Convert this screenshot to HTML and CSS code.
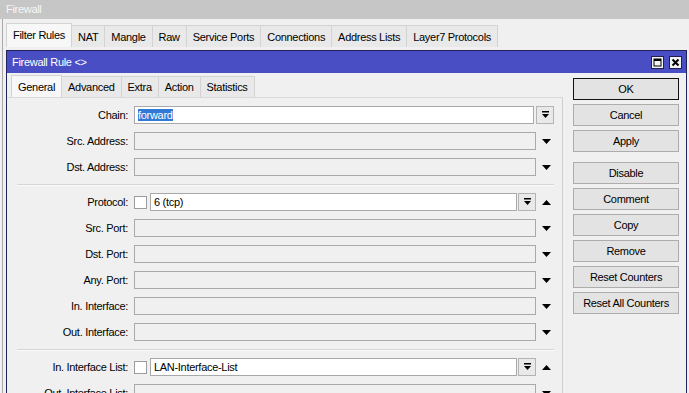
FILE: index.html
```html
<!DOCTYPE html>
<html lang="en">
<head>
    <meta charset="UTF-8">
    <meta name="viewport" content="width=device-width, initial-scale=1.0">
    <title>Firewall Rule</title>
    <link rel="stylesheet" href="styles.css">
</head>
<body>
    <div class="winbar">Firewall</div>
    <div class="workspace">
        <div class="tabs outer">
            <div class="tab active">Filter Rules</div>
            <div class="tab">NAT</div>
            <div class="tab">Mangle</div>
            <div class="tab">Raw</div>
            <div class="tab">Service Ports</div>
            <div class="tab">Connections</div>
            <div class="tab">Address Lists</div>
            <div class="tab">Layer7 Protocols</div>
        </div>

        <div class="dialog">
            <div class="dlg-title">
                <span>Firewall Rule &lt;&gt;</span>
                <div class="dlg-ctrls">
                    <div class="ctrl">
                        <svg width="11" height="11" viewBox="0 0 11 11"><rect x="2" y="2" width="7" height="7" fill="none" stroke="#000" stroke-width="1"/><rect x="2" y="2" width="7" height="2" fill="#000"/></svg>
                    </div>
                    <div class="ctrl">
                        <svg width="11" height="11" viewBox="0 0 11 11"><path d="M2.5 2.5 L8.5 8.5 M8.5 2.5 L2.5 8.5" stroke="#000" stroke-width="2"/></svg>
                    </div>
                </div>
            </div>

            <div class="dlg-main">
                <div class="dlg-left">
                    <div class="tabs inner">
                        <div class="tab active">General</div>
                        <div class="tab">Advanced</div>
                        <div class="tab">Extra</div>
                        <div class="tab">Action</div>
                        <div class="tab">Statistics</div>
                    </div>

                    <div class="panel">
                        <div class="row">
                            <label>Chain:</label>
                            <div class="field white"><span class="selected">forward</span></div>
                            <div class="ddbtn"><svg width="7" height="8" viewBox="0 0 7 8"><rect x="0" y="0" width="7" height="1.5" fill="#000"/><polygon points="0,3 7,3 3.5,7" fill="#000"/></svg></div>
                            <div class="pad"></div>
                        </div>
                        <div class="row">
                            <label>Src. Address:</label>
                            <div class="field"></div>
                            <div class="arrow"><svg width="9" height="5" viewBox="0 0 9 5"><polygon points="0,0 9,0 4.5,5" fill="#000"/></svg></div>
                        </div>
                        <div class="row">
                            <label>Dst. Address:</label>
                            <div class="field"></div>
                            <div class="arrow"><svg width="9" height="5" viewBox="0 0 9 5"><polygon points="0,0 9,0 4.5,5" fill="#000"/></svg></div>
                        </div>

                        <div class="sep"></div>

                        <div class="row">
                            <label>Protocol:</label>
                            <div class="check"></div>
                            <div class="field white">6 (tcp)</div>
                            <div class="ddbtn small"><svg width="7" height="8" viewBox="0 0 7 8"><rect x="0" y="0" width="7" height="1.5" fill="#000"/><polygon points="0,3 7,3 3.5,7" fill="#000"/></svg></div>
                            <div class="arrow"><svg width="9" height="5" viewBox="0 0 9 5"><polygon points="0,5 9,5 4.5,0" fill="#000"/></svg></div>
                        </div>
                        <div class="row">
                            <label>Src. Port:</label>
                            <div class="field"></div>
                            <div class="arrow"><svg width="9" height="5" viewBox="0 0 9 5"><polygon points="0,0 9,0 4.5,5" fill="#000"/></svg></div>
                        </div>
                        <div class="row">
                            <label>Dst. Port:</label>
                            <div class="field"></div>
                            <div class="arrow"><svg width="9" height="5" viewBox="0 0 9 5"><polygon points="0,0 9,0 4.5,5" fill="#000"/></svg></div>
                        </div>
                        <div class="row">
                            <label>Any. Port:</label>
                            <div class="field"></div>
                            <div class="arrow"><svg width="9" height="5" viewBox="0 0 9 5"><polygon points="0,0 9,0 4.5,5" fill="#000"/></svg></div>
                        </div>
                        <div class="row">
                            <label>In. Interface:</label>
                            <div class="field"></div>
                            <div class="arrow"><svg width="9" height="5" viewBox="0 0 9 5"><polygon points="0,0 9,0 4.5,5" fill="#000"/></svg></div>
                        </div>
                        <div class="row">
                            <label>Out. Interface:</label>
                            <div class="field"></div>
                            <div class="arrow"><svg width="9" height="5" viewBox="0 0 9 5"><polygon points="0,0 9,0 4.5,5" fill="#000"/></svg></div>
                        </div>

                        <div class="sep"></div>

                        <div class="row">
                            <label>In. Interface List:</label>
                            <div class="check"></div>
                            <div class="field white">LAN-Interface-List</div>
                            <div class="ddbtn small"><svg width="7" height="8" viewBox="0 0 7 8"><rect x="0" y="0" width="7" height="1.5" fill="#000"/><polygon points="0,3 7,3 3.5,7" fill="#000"/></svg></div>
                            <div class="arrow"><svg width="9" height="5" viewBox="0 0 9 5"><polygon points="0,5 9,5 4.5,0" fill="#000"/></svg></div>
                        </div>
                        <div class="row">
                            <label>Out. Interface List:</label>
                            <div class="field"></div>
                            <div class="arrow"><svg width="9" height="5" viewBox="0 0 9 5"><polygon points="0,0 9,0 4.5,5" fill="#000"/></svg></div>
                        </div>
                    </div>
                </div>

                <div class="btncol">
                    <div class="btn default">OK</div>
                    <div class="btn">Cancel</div>
                    <div class="btn">Apply</div>
                    <div class="btn spaced">Disable</div>
                    <div class="btn">Comment</div>
                    <div class="btn">Copy</div>
                    <div class="btn">Remove</div>
                    <div class="btn">Reset Counters</div>
                    <div class="btn">Reset All Counters</div>
                </div>
            </div>
        </div>
    </div>
</body>
</html>
```

FILE: styles.css
```css
body {
    margin: 0;
    height: 393px;
    overflow: hidden;
    font-family: "Liberation Sans", Arial, sans-serif;
    font-size: 11px;
    letter-spacing: -0.3px;
    color: #000;
    background-color: #f0f0f0;
}
.winbar {
    height: 19px;
    line-height: 19px;
    padding-left: 6px;
    background-color: #c6c6c6;
    color: #f6f6f6;
}
.workspace {
    margin-left: 2px;
    padding: 4px 0 0 3px;
    border-left: 1px solid #a8a8a8;
    height: 400px;
}

/* tabs */
.tabs {
    display: flex;
    align-items: flex-end;
}
.tab {
    height: 22px;
    line-height: 22px;
    padding: 0 6px;
    background-color: #e9e9e9;
    border: 1px solid #d3d3d3;
    border-left: none;
    border-bottom: none;
    box-sizing: border-box;
}
.tab.active {
    height: 24px;
    line-height: 23px;
    background-color: #f7f7f7;
    border-left: 1px solid #d3d3d3;
}
.outer {
    height: 24px;
}

/* dialog */
.dialog {
    margin-top: 3px;
    width: 681px;
    box-sizing: border-box;
    border: 1px solid #23235c;
    border-bottom: none;
}
.dlg-title {
    height: 22px;
    display: flex;
    align-items: center;
    justify-content: space-between;
    padding: 0 4px 0 5px;
    background-color: #4a4ec4;
    color: #fff;
}
.dlg-ctrls {
    display: flex;
    gap: 5px;
}
.ctrl {
    width: 13px;
    height: 13px;
    box-sizing: border-box;
    border: 1px solid #1e1e50;
    background-color: #f4f4f4;
    display: flex;
    align-items: center;
    justify-content: center;
}
.dlg-main {
    display: flex;
}
.dlg-left {
    width: 556px;
}
.inner {
    margin-top: 2px;
    padding-left: 4px;
}
.inner .tab {
    height: 21px;
    line-height: 21px;
}
.inner .tab.active {
    height: 22px;
    line-height: 22px;
}
.panel {
    padding: 8px 6px 0 0;
    border-top: 1px solid #d9d9d9;
    border-right: 1px solid #cfcfcf;
    height: 400px;
}

/* form rows */
.row {
    display: flex;
    align-items: center;
    height: 18px;
    margin-bottom: 8px;
}
.row label {
    width: 121px;
    margin-right: 6px;
    text-align: right;
    flex-shrink: 0;
}
.field {
    flex: 1;
    height: 18px;
    box-sizing: border-box;
    border: 1px solid #a9a9a9;
    background-color: #f0f0f0;
    padding-left: 3px;
    line-height: 16px;
    white-space: nowrap;
    overflow: hidden;
}
.field.white {
    background-color: #fff;
}
.selected {
    background-color: #3179d6;
    color: #fff;
}
.ddbtn {
    width: 18px;
    height: 18px;
    margin-left: 2px;
    box-sizing: border-box;
    border: 1px solid #b4b4b4;
    background-color: #e9e9e9;
    display: flex;
    align-items: center;
    justify-content: center;
    flex-shrink: 0;
}
.ddbtn.small {
    margin-left: 1px;
}
.pad {
    width: 2px;
    flex-shrink: 0;
}
.arrow {
    width: 20px;
    flex-shrink: 0;
    display: flex;
    align-items: center;
    justify-content: center;
}
.check {
    width: 13px;
    height: 13px;
    margin-right: 3px;
    box-sizing: border-box;
    border: 1px solid #9c9c9c;
    background-color: #fff;
    flex-shrink: 0;
}
.sep {
    height: 0;
    margin: 1px 2px 7px 10px;
    border-top: 1px solid #d6d6d6;
    border-bottom: 1px solid #fbfbfb;
}

/* buttons */
.btncol {
    width: 106px;
    padding: 5px 7px 0 10px;
}
.btn {
    height: 22px;
    line-height: 20px;
    margin-bottom: 4px;
    box-sizing: border-box;
    border: 1px solid #adadad;
    background-color: #e3e3e3;
    text-align: center;
    white-space: nowrap;
}
.btn.default {
    border-color: #111;
}
.btn.spaced {
    margin-top: 10px;
}
```
